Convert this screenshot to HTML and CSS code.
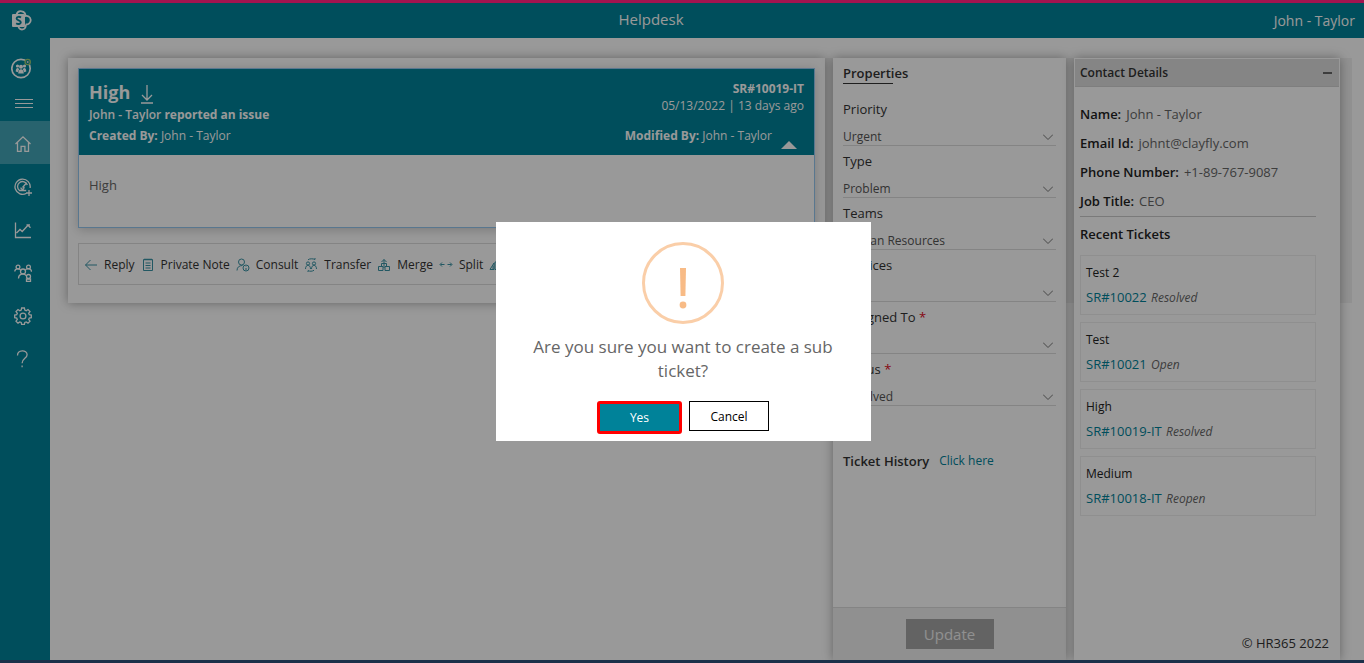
FILE: index.html
```html
<!DOCTYPE html>
<html lang="en">
<head>
<meta charset="utf-8">
<title>Helpdesk</title>
<link rel="stylesheet" href="styles.css">
</head>
<body>
<div class="app">
  <header class="topbar">
    <a class="logo" href="#" aria-label="SharePoint">
      <svg width="22" height="22" viewBox="0 0 22 22" fill="none" stroke="#fff" stroke-width="1.8"><path d="M5.500 4.500a4.600 4.600 0 0 1 9 1.500M13.800 6.200a4.300 4.300 0 1 1 .7 8.200M14.500 14.500a3.600 3.600 0 0 1-7 2.500"/><rect x="1" y="4" width="13" height="13" rx="1" fill="#fff" stroke="none"/><path d="M10 7.500C8.500 6.400 5.600 6.500 5.600 8.600c0 2.200 4.200 1.500 4.200 3.700 0 2-3 2.200-4.600 1" stroke="#008299" stroke-width="1.900"/></svg>
    </a>
    <h1 class="app-title">Helpdesk</h1>
    <span class="user">John - Taylor</span>
  </header>

  <aside class="sidebar">
    <a class="brand" href="#" aria-label="Helpdesk 365">
      <svg width="22" height="22" viewBox="0 0 22 22" fill="none"><circle cx="10" cy="11.500" r="9.200" stroke="#fff" stroke-width="1.700"/><g fill="#fff"><circle cx="6.500" cy="9" r="1.600"/><circle cx="13.500" cy="9" r="1.600"/><circle cx="10" cy="9.800" r="2"/><path d="M4.700 14.500c0-4.200 3-4.400 3.400-1.800-1 .8-1.200 1.800-1.200 2.500zM15.300 14.500c0-4.200-3-4.400-3.400-1.800 1 .8 1.200 1.800 1.200 2.500zM7.200 16.500c0-5.600 5.600-5.600 5.600 0z"/></g><circle cx="16.700" cy="5" r="2.600" fill="#008299" stroke="#9acb72" stroke-width="1.400"/><circle cx="16.700" cy="5" r="1" fill="#ddd"/></svg>
    </a>
    <button class="menu" aria-label="Toggle menu"><svg width="18" height="11" viewBox="0 0 18 11" stroke="#fff"><path d="M0 1.500h18M0 5.500h18M0 9.500h18"/></svg></button>
    <nav class="nav">
      <a class="nav-item active" href="#" aria-label="Home"><svg width="18" height="18" viewBox="0 0 18 18" fill="none" stroke="#fff" stroke-width="1.300"><path d="M1.500 9 9 1.800 16.500 9M3.500 7.500v8.800h3.600v-5h3.800v5h3.600V7.500"/></svg></a>
      <a class="nav-item" href="#" aria-label="Dashboard"><svg width="18" height="18" viewBox="0 0 18 18" fill="none" stroke="#fff" stroke-width="1.300"><path d="M12.500 15.300A7.600 7.600 0 1 1 16.100 10M12.200 12.500H5.500A5 5 0 1 1 13.300 7M8.500 9.500l4.200-4.800M7 9.500a1.500 1.500 0 1 0 2-1.200M15 12v6M12 15h6"/></svg></a>
      <a class="nav-item" href="#" aria-label="Reports"><svg width="18" height="18" viewBox="0 0 18 18" fill="none" stroke="#fff" stroke-width="1.300"><path d="M1.500 1.500v15h15.500M2.500 12l3.500-3.500 2.200 2L14 4.200l2.500 2.500M12.500 3.800H16"/></svg></a>
      <a class="nav-item" href="#" aria-label="Teams"><svg width="18" height="18" viewBox="0 0 18 18" fill="none" stroke="#fff" stroke-width="1.300"><circle cx="4" cy="3" r="1.900"/><circle cx="14.500" cy="3" r="1.900"/><circle cx="9" cy="7.500" r="2.500"/><circle cx="14.500" cy="12.500" r="2"/><path d="M.8 7.500c0-3 5-3.400 6-1M11.500 6c1-2.200 6-1.800 6 1.800M4.500 14.500c0-5 5.500-5.800 7.700-2.800M12.500 17.500V15h4v2.500z"/></svg></a>
      <a class="nav-item" href="#" aria-label="Settings"><svg width="18" height="18" viewBox="0 0 18 18" fill="none" stroke="#fff" stroke-width="1.300"><circle cx="9" cy="9" r="2.900"/><path d="M7.600 1h2.800l.4 2.100 1.400.6L14 2.500l2 2-1.300 1.800.6 1.400 2 .3v2.600l-2 .4-.6 1.400L16 14.200l-2 1.900-1.800-1.200-1.400.5-.4 2H7.600l-.4-2-1.400-.5L4 16.100l-2-1.900 1.300-1.800-.6-1.400-2-.4V8l2-.3.6-1.400L2 4.500l2-2 1.800 1.200 1.400-.6z"/></svg></a>
      <a class="nav-item" href="#" aria-label="Help"><svg width="18" height="18" viewBox="0 0 18 18" fill="none" stroke="#fff" stroke-width="1.300"><path d="M3.500 5.500c0-6 9.600-6 9.600-.8 0 3.800-5 3.600-5 8.500M8.100 15.500v1.800"/></svg></a>
    </nav>
  </aside>

  <main class="main">
    <div class="workspace">
      <section class="panel ticket-panel">
        <article class="ticket">
          <header class="ticket-head">
            <div class="ticket-left">
              <h2 class="ticket-title">High <svg width="12" height="19" viewBox="0 0 12 19" fill="none" stroke="#fff" stroke-width="1.300"><path d="M6 0v15M1 10l5 5 5-5M0 18h12"/></svg></h2>
              <p class="ticket-line semi">John - Taylor <b>reported an issue</b></p>
              <p class="ticket-line created"><b>Created By:</b> John - Taylor</p>
            </div>
            <div class="ticket-right">
              <p class="ticket-id"><b>SR#10019-IT</b></p>
              <p class="ticket-date">05/13/2022 | 13 days ago</p>
              <div class="modified"><p><b>Modified By:</b> John - Taylor</p>
                <button class="collapse" aria-label="Collapse"><svg width="16" height="8" viewBox="0 0 16 8"><path d="M0 8 8 0l8 8z" fill="#fff"/></svg></button></div>
            </div>
          </header>
          <div class="ticket-body">High</div>
        </article>
        <div class="toolbar">
          <button><svg width="14" height="14" viewBox="0 0 14 14"><path d="M13 7H1.500M6.500 2l-5 5 5 5"/></svg>Reply</button>
          <button><svg width="14" height="14" viewBox="0 0 14 14"><path d="M2.500 1.500h9v11h-9zM4 .5v2M6 .5v2M8 .5v2M10 .5v2M4.500 5h5M4.500 7.500h5M4.500 10h5"/></svg>Private Note</button>
          <button><svg width="14" height="14" viewBox="0 0 14 14"><circle cx="5.500" cy="4" r="3"/><circle cx="10" cy="10" r="3"/><path d="M1 12.500c0-3.500 2.500-5 5.500-5M10 8.500V9M10 10v2"/></svg>Consult</button>
          <button><svg width="14" height="14" viewBox="0 0 14 14"><circle cx="4" cy="5.500" r="1.600"/><circle cx="10" cy="5.500" r="1.600"/><path d="M1.500 11c0-5 5-5 5 0M7.500 11c0-5 5-5 5 0M4 1.800C5.500.5 9 .5 11 1.500V0M10 12.300c-2 1.200-4 1.200-6 .3v1.400"/></svg>Transfer</button>
          <button><svg width="14" height="14" viewBox="0 0 14 14"><path d="M1.500 8.500h4.500v4H1.500zM8 8.500h4.500v4H8zM4.500 8.500v-3h5v3M7 10V1.500M4.500 4 7 1.500 9.500 4"/></svg>Merge</button>
          <button><svg width="14" height="14" viewBox="0 0 14 14"><path d="M1.500 6.500h4M8.500 6.500h4M3 4.500l-2 2 2 2M11 4.500l2 2-2 2"/></svg>Split</button>
          <button><svg width="14" height="14" viewBox="0 0 14 14"><path d="M1 11.500 5 5v6.500zM4 8v3.500M6 11.500V4h5v7.500z"/></svg>Sub Ticket</button>
        </div>
      </section>

      <section class="panel properties">
        <form class="fields">
          <h2 class="props-title">Properties</h2>
          <div class="field"><label for="priority">Priority</label><div class="select"><select id="priority"><option>Urgent</option></select><svg width="10" height="6" viewBox="0 0 10 6"><path d="M0 .5l5 5 5-5"/></svg></div></div>
          <div class="field"><label for="type">Type</label><div class="select"><select id="type"><option>Problem</option></select><svg width="10" height="6" viewBox="0 0 10 6"><path d="M0 .5l5 5 5-5"/></svg></div></div>
          <div class="field"><label for="teams">Teams</label><div class="select"><select id="teams"><option>Human Resources</option></select><svg width="10" height="6" viewBox="0 0 10 6"><path d="M0 .5l5 5 5-5"/></svg></div></div>
          <div class="field"><label for="services">Services</label><div class="select"><select id="services"><option></option></select><svg width="10" height="6" viewBox="0 0 10 6"><path d="M0 .5l5 5 5-5"/></svg></div></div>
          <div class="field"><label for="assigned">Assigned To <span class="req">*</span></label><div class="select"><select id="assigned"><option></option></select><svg width="10" height="6" viewBox="0 0 10 6"><path d="M0 .5l5 5 5-5"/></svg></div></div>
          <div class="field"><label for="status">Status <span class="req">*</span></label><div class="select"><select id="status"><option>Resolved</option></select><svg width="10" height="6" viewBox="0 0 10 6"><path d="M0 .5l5 5 5-5"/></svg></div></div>
          <p class="history"><span>Ticket History</span><a href="#">Click here</a></p>
        </form>
        <footer class="props-foot"><button class="update">Update</button></footer>
      </section>

      <section class="panel contact">
        <header class="contact-head"><h2>Contact Details</h2><button aria-label="Collapse contact details"><svg width="9" height="2" viewBox="0 0 9 2"><path d="M0 1h9" stroke="#666" stroke-width="2"/></svg></button></header>
        <div class="contact-body">
          <dl class="details">
            <div><dt>Name:</dt><dd>John - Taylor</dd></div>
            <div><dt>Email Id:</dt><dd>johnt@clayfly.com</dd></div>
            <div><dt>Phone Number:</dt><dd>+1-89-767-9087</dd></div>
            <div><dt>Job Title:</dt><dd>CEO</dd></div>
          </dl>
          <h3 class="recent-title">Recent Tickets</h3>
          <ul class="recent">
            <li><p>Test 2</p><a href="#">SR#10022</a> <em>Resolved</em></li>
            <li><p>Test</p><a href="#">SR#10021</a> <em>Open</em></li>
            <li><p>High</p><a href="#">SR#10019-IT</a> <em>Resolved</em></li>
            <li><p>Medium</p><a href="#">SR#10018-IT</a> <em>Reopen</em></li>
          </ul>
        </div>
        <footer class="copyright">© HR365 2022</footer>
      </section>
    </div>
  </main>
</div>

<div class="overlay">
  <div class="dialog" role="dialog" aria-modal="true" aria-labelledby="question">
    <svg class="warning" width="82" height="82" viewBox="0 0 82 82"><circle cx="41" cy="41" r="39.500" fill="none" stroke="#facea8" stroke-width="3"/><path d="M38 26h6l-.6 28h-4.800z" fill="#f8bb86"/><circle cx="41" cy="63" r="3.400" fill="#f8bb86"/></svg>
    <h2 id="question" class="question">Are you sure you want to create a sub ticket?</h2>
    <div class="actions"><button class="yes">Yes</button><button class="cancel">Cancel</button></div>
  </div>
</div>
</body>
</html>
```

FILE: styles.css
```css
* { box-sizing: border-box; }
body, h1, h2, h3, p, ul, dl, dd { margin: 0; }
body {
  min-height: 100vh;
  display: grid;
  border-top: 3px solid #a3134f;
  border-bottom: 3px solid #1b3049;
  font-family: "Segoe UI", "Open Sans", sans-serif;
  font-size: 12px;
  line-height: 18px;
  color: #333;
  background: #fff;
}
button { font: inherit; color: inherit; background: none; border: 0; padding: 0; }
a { color: #008299; text-decoration: none; }
b { font-weight: 700; }
svg { display: block; flex: none; }

.app {
  display: grid;
  grid-template: 35px 1fr / 50px minmax(0, 1fr);
}
.topbar {
  grid-column: 1 / -1;
  display: flex;
  align-items: center;
  background: #008299;
  color: #fff;
}
.logo { width: 50px; padding-left: 11px; }
.app-title { flex: 1; padding-bottom: 3px; font-size: 15px; font-weight: 400; text-align: center; }
.user { min-width: 112px; padding-right: 9px; font-size: 14px; text-align: right; }

.sidebar { background: #008299; padding-top: 8px; }
.brand { display: flex; align-items: center; height: 44px; padding-left: 11px; }
.menu { display: flex; align-items: center; height: 26px; padding-left: 15px; margin-bottom: 5px; }
.nav-item { display: flex; align-items: center; height: 43px; padding: 3px 0 0 14px; }
.active { background: #43a6b8; }

.main { display: grid; padding: 20px 12px 0 18px; }
.workspace {
  display: grid;
  grid-template-columns: 757fr 233fr 266fr;
  gap: 8px;
  padding-right: 12px;
  background: linear-gradient(#f2f2f2, #f2f2f2) no-repeat 0 0 / 100% 245px;
}
.panel { background: #fff; box-shadow: 0 0 10px rgba(0, 0, 0, 0.35); min-width: 0; }

.ticket-panel { align-self: start; padding: 10px 10px 18px; }
.ticket { border: 1px solid #94c6ee; box-shadow: 0 2px 10px rgba(0, 0, 0, 0.2); }
.ticket-head {
  display: flex;
  justify-content: space-between;
  height: 86px;
  padding: 11px 10px 0;
  background: #008299;
  color: #fff;
}
.ticket-title { display: flex; align-items: center; gap: 11px; margin-bottom: 2px; font-size: 18px; line-height: 24px; font-weight: 700; }
.ticket-title svg { margin-top: 4px; }
.semi { font-weight: 600; }
.created { margin-top: 3px; }
.ticket-right { text-align: right; }
.ticket-id, .ticket-date { line-height: 17px; }
.modified { display: flex; justify-content: flex-end; align-items: flex-start; gap: 9px; margin-top: 13px; padding-right: 7px; }
.collapse { padding-top: 14px; }
.ticket-body { height: 72px; padding: 21px 10px; font-size: 13px; color: #666; }
.toolbar {
  display: flex;
  align-items: center;
  gap: 6px;
  height: 42px;
  margin-top: 15px;
  padding-left: 5px;
  border: 1px solid #dcdcdc;
  overflow: hidden;
}
.toolbar button { display: flex; align-items: center; gap: 6px; padding-top: 2px; white-space: nowrap; }
.toolbar svg { fill: none; stroke: #3a93a5; }

.properties { display: flex; flex-direction: column; }
.fields { flex: 1; padding: 6px 10px; font-size: 13px; }
.props-title { width: 50px; margin-bottom: 16px; font-size: 13px; line-height: 19px; font-weight: 600; border-bottom: 1px solid #333; }
.field { height: 52px; display: flex; flex-direction: column; justify-content: space-between; }
.field label { line-height: 18px; }
.select { display: grid; align-items: center; height: 17px; margin-bottom: 6px; border-bottom: 1px solid #ddd; }
.select > * { grid-area: 1 / 1; }
.select select {
  appearance: none;
  width: 100%;
  padding: 0;
  border: 0;
  background: none;
  font: inherit;
  font-size: 12px;
  line-height: 16px;
  color: #555;
}
.select svg { justify-self: end; margin-right: 3px; fill: none; stroke: #777; pointer-events: none; }
.req { color: #e00b1c; }
.history { display: flex; gap: 10px; margin-top: 40px; }
.history span { font-weight: 600; }
.history a { font-size: 12px; }
.props-foot { display: flex; justify-content: center; padding: 11px 0; background: #f1f1f1; border-top: 1px solid #ddd; }
.update { width: 88px; height: 30px; background: #a6a6a6; color: #f0f0f0; font-size: 15px; }

.contact { display: flex; flex-direction: column; padding: 1px; }
.contact-head { display: flex; justify-content: space-between; align-items: center; height: 28px; padding: 0 7px 0 5px; background: #dedede; border-bottom: 1px solid #d2d2d2; }
.contact-head h2 { padding-top: 1px; font-size: 12px; font-weight: 600; }
.contact-body { flex: 1; padding: 13px 23px 0 5px; }
.details { border-bottom: 1px solid #ccc; }
.details div { display: flex; gap: 5px; height: 29px; font-size: 13px; line-height: 29px; }
.details dt { font-weight: 600; color: #222; }
.details dd { color: #666; }
.recent-title { margin: 8px 0 12px; font-size: 13px; line-height: 18px; font-weight: 600; color: #222; }
.recent { list-style: none; padding: 0; display: grid; gap: 7px; }
.recent li { height: 60px; padding: 5px; border: 1px solid #eee; font-size: 13px; line-height: 24px; }
.recent p { font-size: 12px; color: #222; font-weight: 500; }
.recent em { color: #666; font-size: 12px; margin-left: 1px; }
.copyright { padding: 0 10px 7px; font-size: 13px; text-align: right; }

.overlay {
  position: fixed;
  inset: 3px 0;
  display: grid;
  place-items: center;
  padding-left: 2px;
  background: rgba(0, 0, 0, 0.4);
}
.dialog {
  width: 375px;
  padding: 20px 30px 7px;
  background: #fff;
  display: flex;
  flex-direction: column;
  align-items: center;
}
.question { margin: 11px 0 18px; font-size: 17px; line-height: 24px; font-weight: 400; color: #666; text-align: center; }
.actions { display: flex; gap: 7px; }
.yes { width: 85px; height: 33px; background: #008299; color: #fff; border: 3px solid #f00; border-radius: 3px; }
.cancel { width: 80px; height: 30px; padding-top: 2px; border: 1px solid #000; color: #000; }
```
